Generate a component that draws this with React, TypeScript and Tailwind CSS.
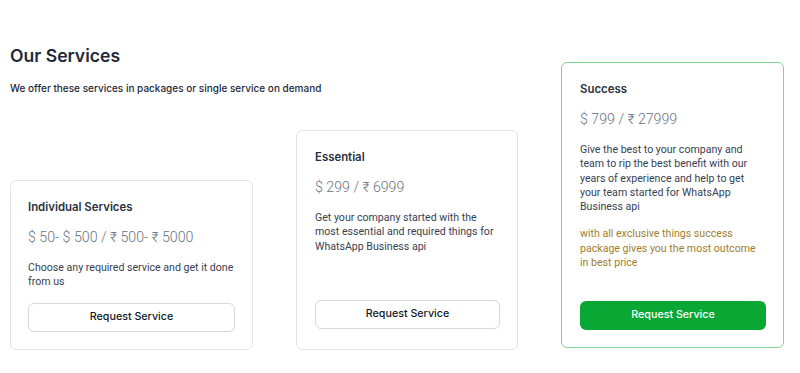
import React from 'react';

interface Plan {
  title: string;
  price: string;
  text: string;
  extra?: string;
  featured?: boolean;
  box: string;
}

const plans: Plan[] = [
  {
    title: 'Individual Services',
    price: '$ 50- $ 500 / ₹ 500- ₹ 5000',
    text: 'Choose any required service and get it done from us',
    box: 'w-[243px] h-[170px] pl-[17px] pr-[17px] pb-[17px]',
  },
  {
    title: 'Essential',
    price: '$ 299 / ₹ 6999',
    text: 'Get your company started with the most essential and required things for WhatsApp Business api',
    box: 'w-[222px] h-[220px] pl-[18px] pr-[17px] pb-[20px]',
  },
  {
    title: 'Success',
    price: '$ 799 / ₹ 27999',
    text: 'Give the best to your company and team to rip the best benefit with our years of experience and help to get your team started for WhatsApp Business api',
    extra: 'with all exclusive things success package gives you the most outcome in best price',
    featured: true,
    box: 'w-[223px] h-[286px] pl-[18px] pr-[17px] pb-[17px] mb-[2px]',
  },
];

const PlanCard: React.FC<{ plan: Plan }> = ({ plan }) => {
  return (
    <div
      className={`${plan.box} flex flex-col rounded-[6px] border bg-white pt-[17px] ${
        plan.featured ? 'border-[#7dd58f]' : 'border-[#e2e4e8]'
      }`}
    >
      <h3 className="font-['Inter'] text-[11.4px] leading-[18px] font-semibold text-[#2a3140]">{plan.title}</h3>
      <p className="mt-[11px] font-['Roboto'] text-[14.2px] leading-[20px] font-light text-[#6b7280]">{plan.price}</p>
      <p className="mt-[14px] font-['Roboto'] text-[10.6px] leading-[14.3px] text-[#374151]">{plan.text}</p>
      {plan.extra && (
        <p className="mt-[13px] font-['Roboto'] text-[10.6px] leading-[14.3px] text-[#a07d2e]">{plan.extra}</p>
      )}
      <button
        className={`mt-auto h-[29px] w-full rounded-[6px] font-['Inter'] text-[10.7px] font-medium ${
          plan.featured
            ? 'bg-[#09a834] text-white'
            : 'border border-[#d4d7dc] bg-white text-[#111827]'
        }`}
      >
        Request Service
      </button>
    </div>
  );
};

export default function App() {
  const [individual, essential, success] = plans;
  return (
    <div className="min-h-[373px] w-[800px] bg-white pl-[10px] pt-[42px]">
      <div className="flex items-end">
        <div className="flex flex-col">
          <h2 className="font-['Inter'] text-[17.6px] leading-[28px] font-semibold text-[#1f2937]">Our Services</h2>
          <p className="mt-[10px] font-['Inter'] text-[10px] leading-[16px] font-medium text-[#1f2937]">
            We offer these services in packages or single service on demand
          </p>
          <div className="mt-[34px] flex items-end gap-[43px]">
            <PlanCard plan={individual} />
            <PlanCard plan={essential} />
          </div>
        </div>
        <div className="ml-[43px]">
          <PlanCard plan={success} />
        </div>
      </div>
    </div>
  );
}
